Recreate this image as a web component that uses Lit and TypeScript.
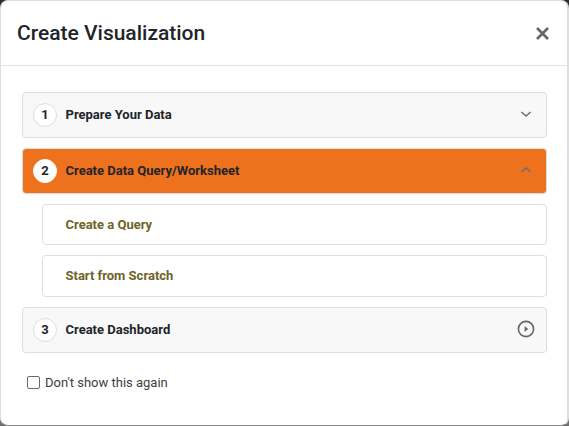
import { LitElement, html, css, svg } from "lit";
import { customElement } from "lit/decorators.js";

@customElement("app-root")
export class AppRoot extends LitElement {
  static styles = css`
    :host {
      display: block;
      width: 569px;
      height: 426px;
      overflow: hidden;
      background: linear-gradient(180deg, #2a2a2a 0%, #6e6e6e 100%);
      font-family: Roboto, "Liberation Sans", sans-serif;
      color: #212529;
    }
    .dialog {
      box-sizing: border-box;
      width: 569px;
      height: 426px;
      background: #fff;
      border: 1px solid #dedede;
      border-right-width: 2px;
      border-bottom: 1px solid #8a8a8a;
      border-radius: 8px;
      display: flex;
      flex-direction: column;
    }
    .header {
      box-sizing: border-box;
      height: 65px;
      flex: none;
      display: flex;
      align-items: center;
      justify-content: space-between;
      padding: 0 17px 0 16px;
      border-bottom: 1px solid #dee2e6;
    }
    h1 {
      margin: 0;
      font-size: 21px;
      font-weight: 500;
      line-height: 24px;
      color: #212529;
    }
    .close {
      display: block;
      width: 15px;
      height: 15px;
    }
    .body {
      padding: 26px 20px 0 21px;
      display: flex;
      flex-direction: column;
    }
    .step {
      box-sizing: border-box;
      height: 46px;
      display: flex;
      align-items: center;
      padding: 0 12px 0 10px;
      background: #f8f8f8;
      border: 1px solid #dedede;
      border-radius: 4px;
      margin-bottom: 10px;
      font-size: 13px;
      font-weight: 700;
    }
    .step.active {
      background: #ee711d;
    }
    .num {
      box-sizing: border-box;
      width: 24px;
      height: 24px;
      flex: none;
      border-radius: 50%;
      background: #fff;
      border: 1px solid #dedede;
      display: flex;
      align-items: center;
      justify-content: center;
      padding-bottom: 1px;
      margin-right: 8.5px;
    }
    .active .num {
      border-color: #fff;
    }
    .label {
      flex: 1;
      padding-bottom: 2px;
    }
    .sub {
      box-sizing: border-box;
      margin-left: 20px;
      display: flex;
      align-items: center;
      padding-left: 22.5px;
      background: #fff;
      border: 1px solid #dedede;
      border-radius: 4px;
      font-size: 13px;
      font-weight: 700;
      color: #6d6427;
    }
    .sub.a {
      height: 41px;
      margin-bottom: 10px;
    }
    .sub.b {
      height: 42px;
      margin-bottom: 10px;
      padding-bottom: 2px;
    }
    .chev {
      display: block;
      width: 12px;
      height: 8px;
      margin-right: 2px;
      margin-bottom: 2px;
    }
    .play {
      display: block;
      width: 18px;
      height: 18px;
      margin-right: -1px;
      margin-bottom: 2px;
    }
    .check {
      display: flex;
      align-items: center;
      margin: 12px 0 0 5px;
      font-size: 13px;
      color: #3a3f44;
    }
    .box {
      box-sizing: border-box;
      width: 13px;
      height: 13px;
      border: 1px solid #6a6a6a;
      border-radius: 2px;
      background: #fff;
      margin-right: 5px;
    }
  `;

  private down = svg`<path d="M1.4 2 L6 6 L10.6 2" fill="none" stroke="#66707a" stroke-width="1.5"/>`;
  private up = svg`<path d="M1.4 6 L6 2 L10.6 6" fill="none" stroke="#66707a" stroke-width="1.5"/>`;

  render() {
    return html`
      <div class="dialog">
        <div class="header">
          <h1>Create Visualization</h1>
          <svg class="close" viewBox="0 0 15 15">
            <path d="M2 2 L13 13 M13 2 L2 13" stroke="#666" stroke-width="2.6" fill="none" />
          </svg>
        </div>
        <div class="body">
          <div class="step">
            <span class="num">1</span><span class="label">Prepare Your Data</span>
            <svg class="chev" viewBox="0 0 12 8">${this.down}</svg>
          </div>
          <div class="step active">
            <span class="num">2</span><span class="label">Create Data Query/Worksheet</span>
            <svg class="chev" viewBox="0 0 12 8">${this.up}</svg>
          </div>
          <div class="sub a">Create a Query</div>
          <div class="sub b">Start from Scratch</div>
          <div class="step">
            <span class="num">3</span><span class="label">Create Dashboard</span>
            <svg class="play" viewBox="0 0 18 18">
              <circle cx="9" cy="9" r="7.6" fill="none" stroke="#666" stroke-width="1.6" />
              <path d="M7.6 6 L11.2 9 L7.6 12 Z" fill="#666" />
            </svg>
          </div>
          <label class="check"><span class="box"></span>Don't show this again</label>
        </div>
      </div>
    `;
  }
}
